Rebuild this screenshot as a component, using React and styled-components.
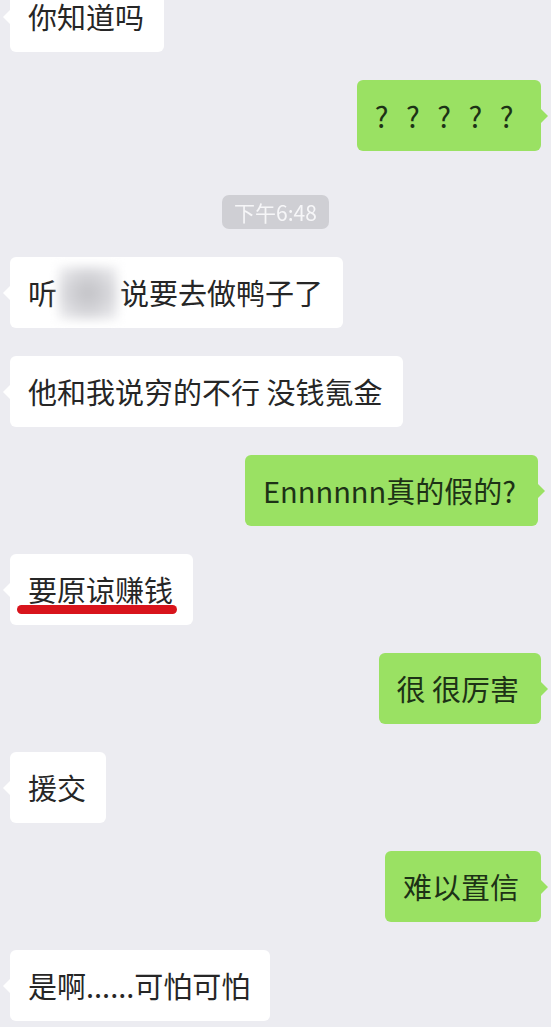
import React from 'react';
import styled, { createGlobalStyle } from 'styled-components';

const GlobalStyle = createGlobalStyle`
  html, body {
    margin: 0;
    padding: 0;
    background: #ececf1;
    overflow: hidden;
  }
  body {
    font-family: "Noto Sans CJK SC", "Noto Sans", sans-serif;
  }
`;

const Page = styled.div`
  width: 551px;
  height: 1027px;
  overflow: hidden;
  background: #ececf1;
`;

const Thread = styled.div`
  display: flex;
  flex-direction: column;
  gap: 28px;
  padding: 0 10px;
  margin-top: -19px;
`;

const Row = styled.div`
  display: flex;
  justify-content: ${p => (p.$mine ? 'flex-end' : 'flex-start')};
  padding-right: ${p => (p.$inset ? '3px' : '0')};
`;

const Bubble = styled.div`
  position: relative;
  display: flex;
  align-items: center;
  min-height: 71px;
  box-sizing: border-box;
  padding: ${p => (p.$mine ? '0 22px 0 18px' : '0 20px 0 18px')};
  border-radius: 6px;
  background: ${p => (p.$mine ? '#9ae163' : '#ffffff')};
  color: ${p => (p.$mine ? '#1d3216' : '#262626')};
  font-size: 29px;
  line-height: 1;
  white-space: nowrap;
  letter-spacing: ${p => p.$spacing || '0'};

  &::after {
    content: '';
    position: absolute;
    top: 50%;
    margin-top: -7px;
    border-top: 7px solid transparent;
    border-bottom: 7px solid transparent;
    ${p =>
      p.$mine
        ? 'right: -7px; border-left: 7px solid #9ae163;'
        : 'left: -7px; border-right: 7px solid #ffffff;'}
  }
`;

// the first bubble is cut by the top of the screen, so its text sits low
const FirstBubble = styled(Bubble)`
  align-items: flex-end;
  padding-bottom: 21px;
`;

const Censor = styled.span`
  display: inline-block;
  width: 60px;
  height: 54px;
  margin: 0 2px 0 1px;
  background: radial-gradient(ellipse at center, #c2c2c6 0%, #d4d4d8 45%, #f6f6f8 100%);
  filter: blur(5px);
`;

const Underline = styled.span`
  position: absolute;
  left: 7px;
  top: 51px;
  width: 160px;
  height: 9px;
  border-radius: 5px;
  background: #d8141c;
  filter: blur(0.6px);
`;

const TimeRow = styled.div`
  display: flex;
  justify-content: center;
  margin-top: 16px;
`;

const TimePill = styled.div`
  height: 34px;
  padding: 0 12px;
  display: flex;
  align-items: center;
  border-radius: 7px;
  background: #cfcfd4;
  color: #f6f6f8;
  font-size: 21px;
  filter: blur(0.7px);
`;

const Incoming = ({ children }) => (
  <Row>
    <Bubble>{children}</Bubble>
  </Row>
);

const Outgoing = ({ children, spacing, inset }) => (
  <Row $mine $inset={inset}>
    <Bubble $mine $spacing={spacing}>{children}</Bubble>
  </Row>
);

export default function App() {
  return (
    <Page>
      <GlobalStyle />
      <Thread>
        <Row>
          <FirstBubble>你知道吗</FirstBubble>
        </Row>
        <Outgoing spacing="5.5px">? ? ? ? ?</Outgoing>
        <TimeRow>
          <TimePill>下午6:48</TimePill>
        </TimeRow>
        <Incoming>
          听<Censor />说要去做鸭子了
        </Incoming>
        <Incoming>他和我说穷的不行 没钱氪金</Incoming>
        <Outgoing inset>Ennnnnn真的假的?</Outgoing>
        <Incoming>
          要原谅赚钱
          <Underline />
        </Incoming>
        <Outgoing>很 很厉害</Outgoing>
        <Incoming>援交</Incoming>
        <Outgoing>难以置信</Outgoing>
        <Incoming>是啊......可怕可怕</Incoming>
      </Thread>
    </Page>
  );
}
